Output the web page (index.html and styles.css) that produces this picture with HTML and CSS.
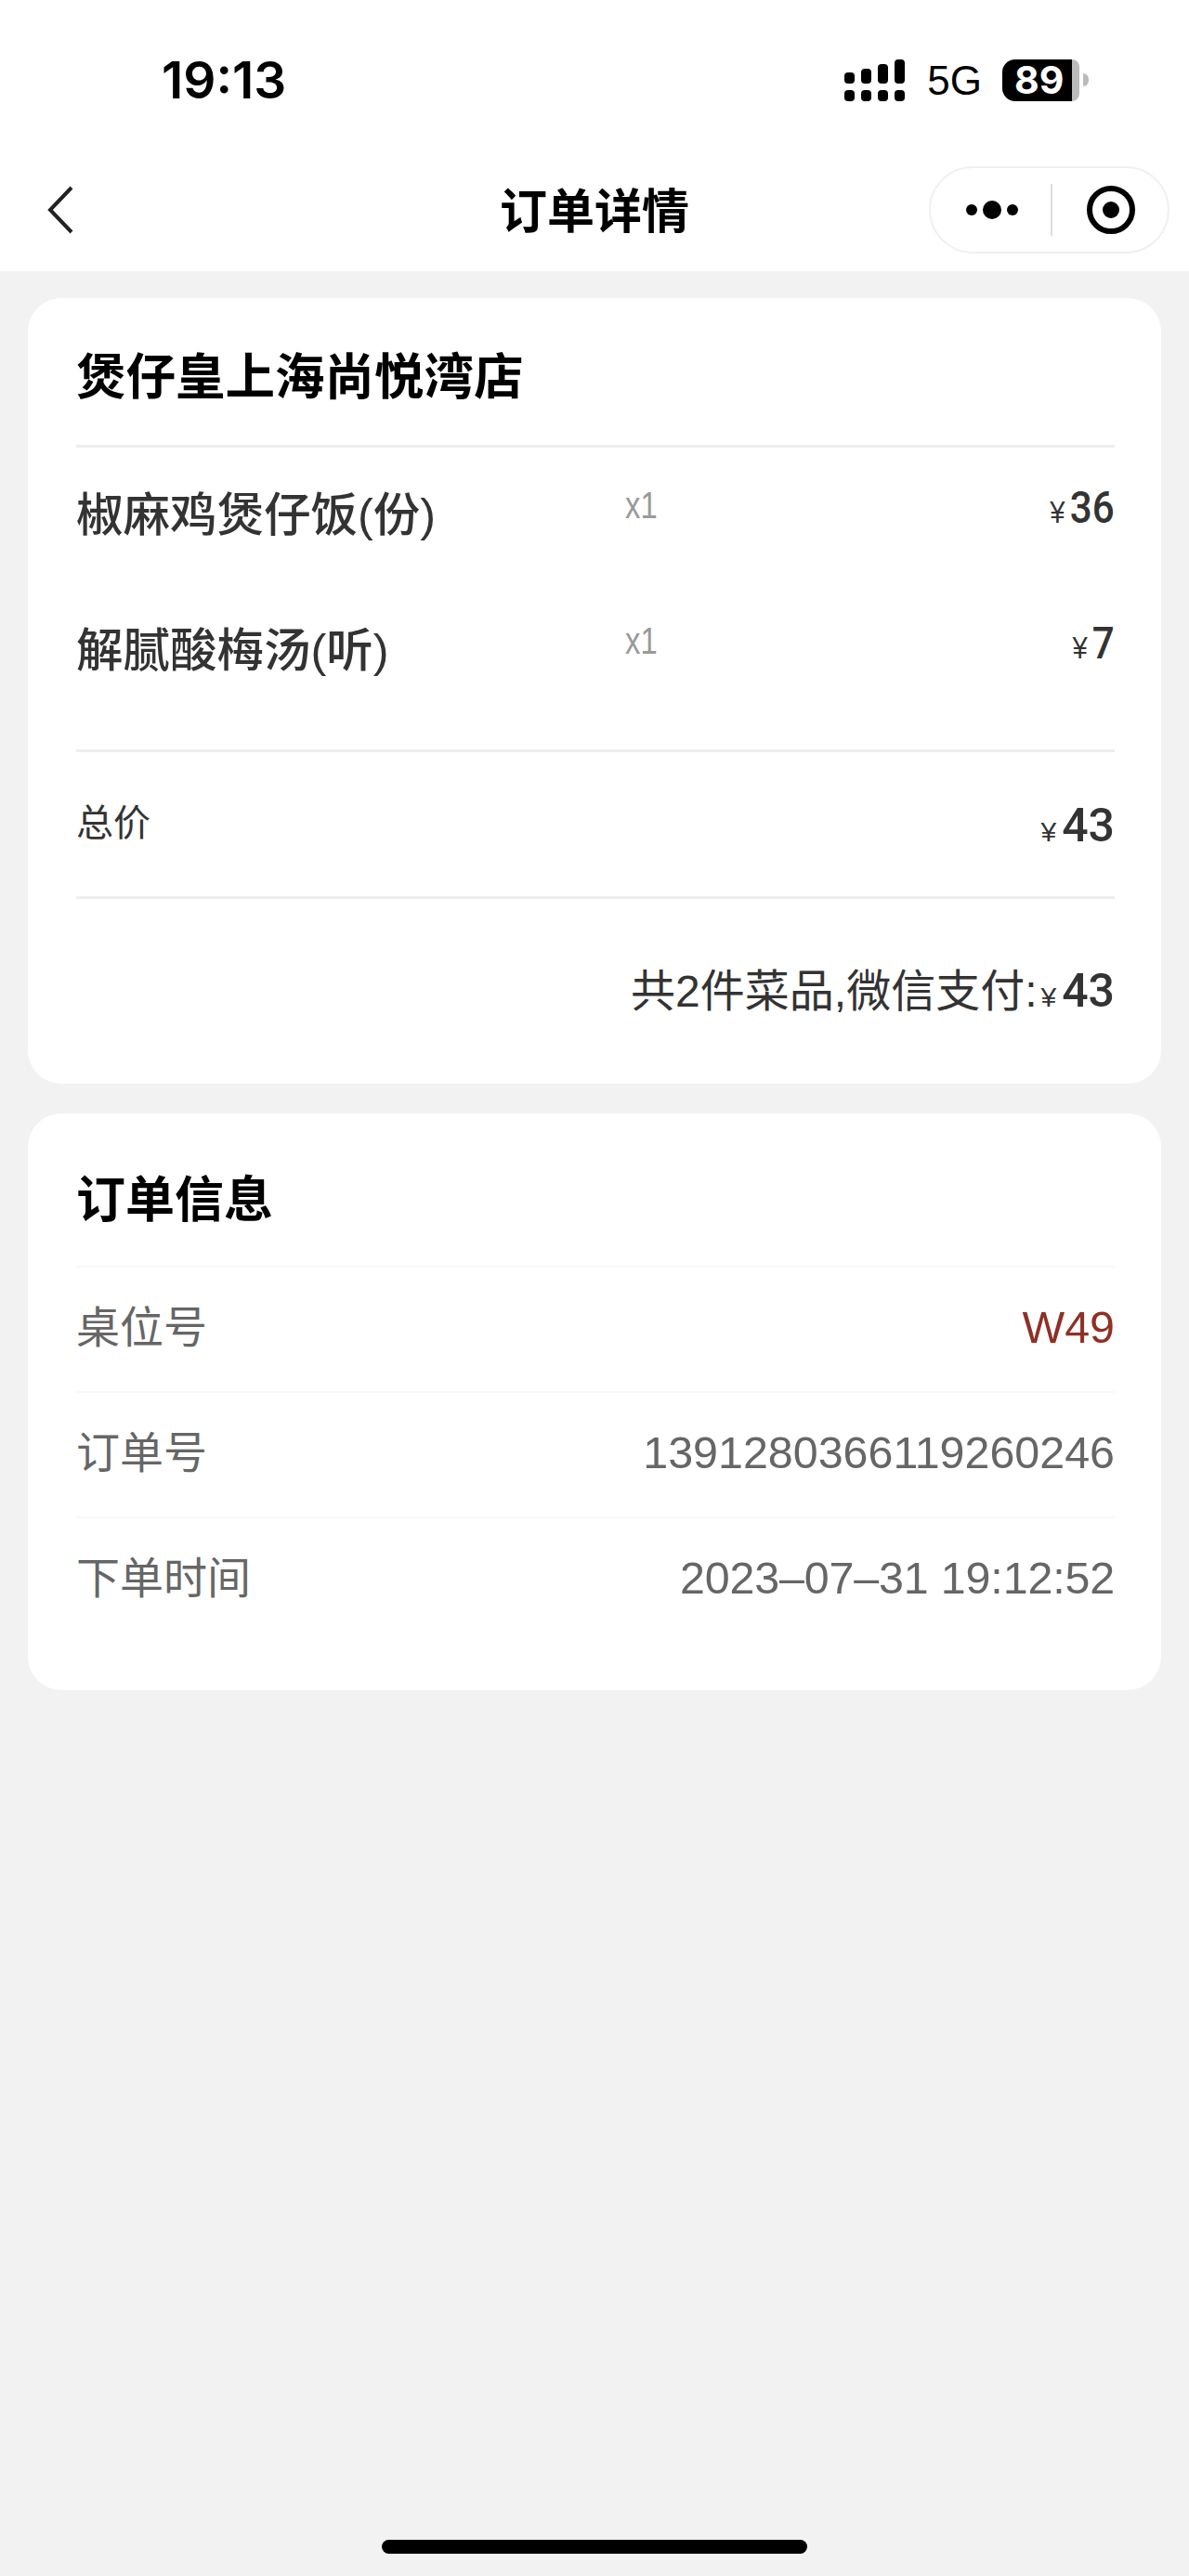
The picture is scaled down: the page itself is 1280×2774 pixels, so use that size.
FILE: index.html
```html
<!DOCTYPE html>
<html lang="zh-CN">
<head>
    <meta charset="UTF-8">
    <meta name="viewport" content="width=device-width, initial-scale=1.0">
    <title>订单详情</title>
    <link rel="stylesheet" href="styles.css">
</head>
<body>
    <div class="page">
        <!-- Top bar -->
        <header class="top">
            <div class="status">
                <span class="time">19:13</span>
                <div class="status-right">
                    <svg class="signal" width="66" height="45" viewBox="0 0 66 45">
                        <rect x="0" y="33" width="11" height="12" rx="4"/>
                        <rect x="18" y="33" width="11" height="12" rx="4"/>
                        <rect x="36" y="33" width="11" height="12" rx="4"/>
                        <rect x="54" y="33" width="11" height="12" rx="4"/>
                        <rect x="0" y="14" width="11" height="12" rx="4"/>
                        <rect x="18" y="10" width="11" height="16" rx="4"/>
                        <rect x="36" y="5" width="11" height="21" rx="4"/>
                        <rect x="54" y="0" width="11" height="26" rx="4"/>
                    </svg>
                    <span class="net">5G</span>
                    <div class="battery">
                        <span class="battery-fill">89</span>
                        <span class="battery-rest"></span>
                        <span class="battery-nub"></span>
                    </div>
                </div>
            </div>
            <nav class="nav">
                <svg class="back" width="30" height="52" viewBox="0 0 30 52">
                    <path d="M27 2 L4 26 L27 50" fill="none" stroke="#222" stroke-width="4"/>
                </svg>
                <h1 class="nav-title">订单详情</h1>
                <div class="capsule">
                    <svg class="dots" width="56" height="20" viewBox="0 0 56 20">
                        <circle cx="6" cy="10" r="6"/>
                        <circle cx="28" cy="10" r="10"/>
                        <circle cx="50" cy="10" r="6"/>
                    </svg>
                    <span class="capsule-line"></span>
                    <svg class="target" width="52" height="52" viewBox="0 0 52 52">
                        <circle cx="26" cy="26" r="23" fill="none" stroke="#000" stroke-width="6"/>
                        <circle cx="26" cy="26" r="9"/>
                    </svg>
                </div>
            </nav>
        </header>

        <main class="content">
            <!-- Dishes -->
            <section class="card">
                <h2 class="shop">煲仔皇上海尚悦湾店</h2>
                <div class="items">
                    <div class="item">
                        <span class="item-name">椒麻鸡煲仔饭(份)</span>
                        <span class="item-qty">x1</span>
                        <span class="item-price"><i class="yen">¥</i>36</span>
                    </div>
                    <div class="item">
                        <span class="item-name">解腻酸梅汤(听)</span>
                        <span class="item-qty">x1</span>
                        <span class="item-price"><i class="yen">¥</i>7</span>
                    </div>
                </div>
                <div class="total">
                    <span class="total-label">总价</span>
                    <span class="amount"><i class="yen">¥</i>43</span>
                </div>
                <div class="paid">共2件菜品,微信支付:<span class="amount"><i class="yen">¥</i>43</span></div>
            </section>

            <!-- Order info -->
            <section class="card">
                <h2 class="info-title">订单信息</h2>
                <div class="info-row">
                    <span class="info-label">桌位号</span>
                    <span class="info-value table-no">W49</span>
                </div>
                <div class="info-row">
                    <span class="info-label">订单号</span>
                    <span class="info-value">1391280366119260246</span>
                </div>
                <div class="info-row">
                    <span class="info-label">下单时间</span>
                    <span class="info-value info-date">2023–07–31 19:12:52</span>
                </div>
            </section>
        </main>

        <div class="home-bar"></div>
    </div>
</body>
</html>
```

FILE: styles.css
```css
* {
    box-sizing: border-box;
}

body {
    margin: 0;
    background-color: #f2f2f2;
    font-family: "Liberation Sans", "Noto Sans CJK SC", sans-serif;
    color: #333;
}

.page {
    display: flex;
    flex-direction: column;
    min-height: 100vh;
}

/* Top bar */
.top {
    background-color: #fff;
    height: 292px;
}

.status {
    display: flex;
    justify-content: space-between;
    align-items: center;
    height: 172px;
    padding: 0 108px 0 174px;
}

.time {
    font-family: Inter, "Liberation Sans", sans-serif;
    font-size: 55px;
    font-weight: 600;
    color: #000;
}

.status-right {
    display: flex;
    align-items: center;
}

.signal {
    fill: #000;
}

.net {
    margin-left: 23px;
    font-size: 44px;
    line-height: 45px;
    color: #000;
}

.battery {
    display: flex;
    align-items: center;
    margin-left: 22px;
}

.battery-fill {
    width: 75px;
    height: 45px;
    padding-left: 13px;
    background-color: #000;
    border-radius: 14px 0 0 14px;
    font-family: Inter, "Liberation Sans", sans-serif;
    color: #fff;
    font-size: 41px;
    font-weight: 700;
    line-height: 45px;
}

.battery-rest {
    width: 8px;
    height: 45px;
    background-color: #bbb;
    border-radius: 0 10px 10px 0;
}

.battery-nub {
    width: 6px;
    height: 14px;
    margin-left: 4px;
    background-color: #bbb;
    border-radius: 0 7px 7px 0;
}

.nav {
    display: grid;
    grid-template-columns: 1fr auto 1fr;
    align-items: center;
    height: 108px;
    padding: 0 21px;
}

.back {
    margin-left: 29px;
}

.nav-title {
    margin: 0;
    padding-bottom: 4px;
    font-size: 51px;
    font-weight: 700;
    color: #000;
}

.capsule {
    display: flex;
    align-items: center;
    justify-self: end;
    width: 259px;
    height: 94px;
    padding-left: 19px;
    background-color: #fff;
    border: 2px solid #f0f0f0;
    border-radius: 47px;
}

.capsule .dots {
    margin-left: 19px;
}

.capsule-line {
    width: 2px;
    height: 56px;
    margin-left: 35px;
    background-color: #ddd;
}

.capsule .target {
    margin-left: 37px;
}

/* Cards */
.content {
    display: flex;
    flex-direction: column;
    gap: 32px;
    padding: 29px 30px 0;
}

.card {
    padding: 0 50px 0 52px;
    background-color: #fff;
    border-radius: 36px;
}

.shop {
    margin: 0;
    padding-top: 14px;
    height: 161px;
    border-bottom: 3px solid #eee;
    font-size: 53.5px;
    line-height: 144px;
    font-weight: 700;
    color: #000;
}

.items {
    padding-bottom: 33px;
    border-bottom: 3px solid #eee;
}

.item {
    display: flex;
    align-items: flex-start;
    height: 146px;
}

.item-name {
    width: 591px;
    font-size: 50.5px;
    line-height: 146px;
    font-weight: 500;
}

/* the digits in the shot are narrower than any installed font */
.item-qty {
    font-size: 41px;
    line-height: 124px;
    color: #999;
    transform: scaleX(0.8);
    transform-origin: left center;
}

.item-price {
    margin-left: auto;
    font-family: Roboto, "Liberation Sans", sans-serif;
    font-size: 49px;
    line-height: 130px;
    font-weight: 500;
    transform: scaleX(0.86);
    transform-origin: right center;
}

.yen {
    margin-right: 6px;
    font-family: "Liberation Sans", sans-serif;
    font-size: 30px;
    font-style: normal;
}

.item-price .yen {
    font-size: 34px;
}

.total {
    display: flex;
    justify-content: space-between;
    align-items: center;
    height: 158px;
    border-bottom: 3px solid #eee;
}

.total-label {
    padding-bottom: 10px;
    font-size: 40px;
}

.amount {
    font-family: Roboto, "Liberation Sans", sans-serif;
    font-size: 50px;
    font-weight: 500;
}

.total .amount {
    padding-top: 3px;
}

.paid {
    height: 199px;
    font-size: 48px;
    line-height: 198px;
    text-align: right;
}

.paid .amount {
    margin-left: 4px;
}

.info-title {
    margin: 0;
    padding-top: 24px;
    height: 164px;
    font-size: 53px;
    line-height: 140px;
    font-weight: 700;
    color: #000;
}

.info-row {
    display: flex;
    justify-content: space-between;
    align-items: center;
    height: 135px;
    border-top: 2px solid #f8f8f8;
    color: #666;
}

.info-row:last-child {
    margin-bottom: 52px;
}

.info-label {
    padding-bottom: 12px;
    font-size: 47px;
}

.info-value {
    padding-bottom: 6px;
    font-size: 48.4px;
}

.info-date {
    letter-spacing: -0.15px;
}

.table-no {
    color: #8f3027;
}

/* Home indicator */
.home-bar {
    flex: none;
    width: 458px;
    height: 15px;
    margin: auto auto 24px;
    background-color: #000;
    border-radius: 8px;
}
```
